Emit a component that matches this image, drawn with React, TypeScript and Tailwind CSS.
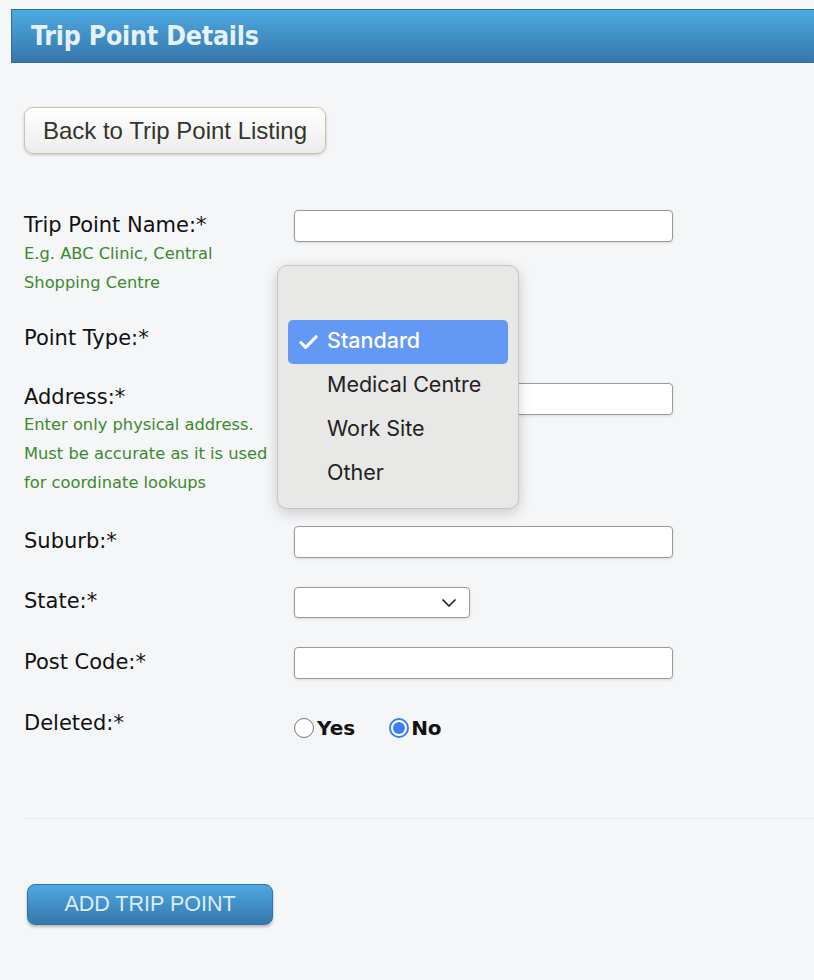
import { Check, ChevronDown } from "lucide-react";

const label = "text-[21px] leading-[26px] text-[#111]";
const hint = "text-[16.3px] leading-[29px] text-[#3b8a2c]";
const input =
  "h-[32px] w-[379px] rounded-[4px] border border-[#9a9a9a] bg-white shadow-[0_1px_3px_rgba(0,0,0,0.12)]";

const menuItems = ["Standard", "Medical Centre", "Work Site", "Other"];

export default function App() {
  return (
    <div
      className="relative min-h-[980px] w-[814px] overflow-hidden bg-[#f5f6f8]"
      style={{ fontFamily: '"DejaVu Sans", Verdana, sans-serif' }}
    >
      {/* Header */}
      <div className="pl-[11px] pt-[9px]">
        <div className="flex h-[54px] items-center border border-r-0 border-[#2f6f9f] bg-gradient-to-b from-[#4da9e3] to-[#3677a9] pl-[19px]">
          <h1
            className="text-[26.5px] font-bold tracking-[-0.2px] text-[#e6f1fa]"
            style={{ fontFamily: '"DejaVu Sans Condensed", "DejaVu Sans", sans-serif' }}
          >
            Trip Point Details
          </h1>
        </div>
      </div>

      <div className="px-[24px]">
        {/* Back button */}
        <button
          className="mt-[44px] flex h-[47px] w-[302px] items-center justify-center rounded-[9px] border border-[#c5c7a6] bg-gradient-to-b from-white to-[#ececec] text-[24px] text-[#34352a] shadow-[0_1px_3px_rgba(0,0,0,0.2)]"
          style={{ fontFamily: '"Liberation Sans", Arial, sans-serif' }}
        >
          Back to Trip Point Listing
        </button>

        {/* Form */}
        <div className="mt-[56px] grid grid-cols-[270px_1fr]">
          <div className="pt-[2px]">
            <div className={label}>Trip Point Name:*</div>
            <div className={`${hint} mt-[1px]`}>E.g. ABC Clinic, Central</div>
            <div className={hint}>Shopping Centre</div>
          </div>
          <div>
            <div className={input} />
          </div>

          <div className="mt-[28px]">
            <div className={label}>Point Type:*</div>
          </div>
          <div className="mt-[28px]" />

          <div className="mt-[33px]">
            <div className={label}>Address:*</div>
            <div className={hint}>Enter only physical address.</div>
            <div className={hint}>Must be accurate as it is used</div>
            <div className={hint}>for coordinate lookups</div>
          </div>
          <div className="mt-[33px] -translate-y-[1px]">
            <div className={input} />
          </div>

          <div className="mt-[31px]">
            <div className={label}>Suburb:*</div>
          </div>
          <div className="mt-[31px] -translate-y-[2px]">
            <div className={input} />
          </div>

          <div className="mt-[28px]">
            <div className={label}>State:*</div>
          </div>
          <div className="mt-[28px] -translate-y-[1px]">
            <div className="flex h-[31px] w-[176px] items-center justify-end rounded-[4px] border border-[#9a9a9a] bg-white pr-[8px] shadow-[0_1px_3px_rgba(0,0,0,0.12)]">
              <ChevronDown className="h-[24px] w-[24px] text-[#222]" strokeWidth={1.75} />
            </div>
          </div>

          <div className="mt-[30px]">
            <div className={label}>Post Code:*</div>
          </div>
          <div className="mt-[30px] -translate-y-[2px]">
            <div className={input} />
          </div>

          <div className="mt-[29px]">
            <div className={label}>Deleted:*</div>
          </div>
          <div className="mt-[29px] flex items-center pt-[3px] text-[20px] font-bold text-[#111]">
            <span className="h-[20px] w-[20px] rounded-full border-[1.5px] border-[#777] bg-white" />
            <span className="ml-[3px]">Yes</span>
            <span className="ml-[34px] flex h-[20px] w-[20px] items-center justify-center rounded-full border-[2px] border-[#3b7ef6] bg-white">
              <span className="h-[12px] w-[12px] rounded-full bg-[#3b7ef6]" />
            </span>
            <span className="ml-[2px]">No</span>
          </div>
        </div>

        <div className="-mr-[24px] mt-[75px] h-px bg-[#e6e8eb]" />

        <button
          className="ml-[3px] mt-[65px] flex h-[41px] w-[246px] items-center justify-center rounded-[8px] border border-[#2f72a5] bg-gradient-to-b from-[#4fa8e2] to-[#3578ab] text-[21.5px] text-[#dcecf8] shadow-[0_2px_3px_rgba(0,0,0,0.25)]"
          style={{ fontFamily: '"Liberation Sans", Arial, sans-serif' }}
        >
          ADD TRIP POINT
        </button>
      </div>

      {/* Open select menu */}
      <div
        className="absolute left-[277px] top-[265px] w-[242px] rounded-[10px] border border-[#c4c4c4] bg-[#e8e8e6] px-[10px] pb-[12px] pt-[54px] shadow-[0_4px_14px_rgba(0,0,0,0.18)]"
        style={{ fontFamily: 'Inter, "Noto Sans", sans-serif' }}
      >
        {menuItems.map((item, i) => (
          <div
            key={item}
            className={`flex h-[44px] items-center rounded-[5px] pb-[3px] pl-[9px] text-[21.5px] ${
              i === 0 ? "bg-[#6399f4] font-medium text-white" : "text-[#222]"
            }`}
          >
            <span className="flex w-[30px] items-center pt-[3px]">
              {i === 0 && <Check className="h-[23px] w-[23px]" strokeWidth={3.2} />}
            </span>
            {item}
          </div>
        ))}
      </div>
    </div>
  );
}
